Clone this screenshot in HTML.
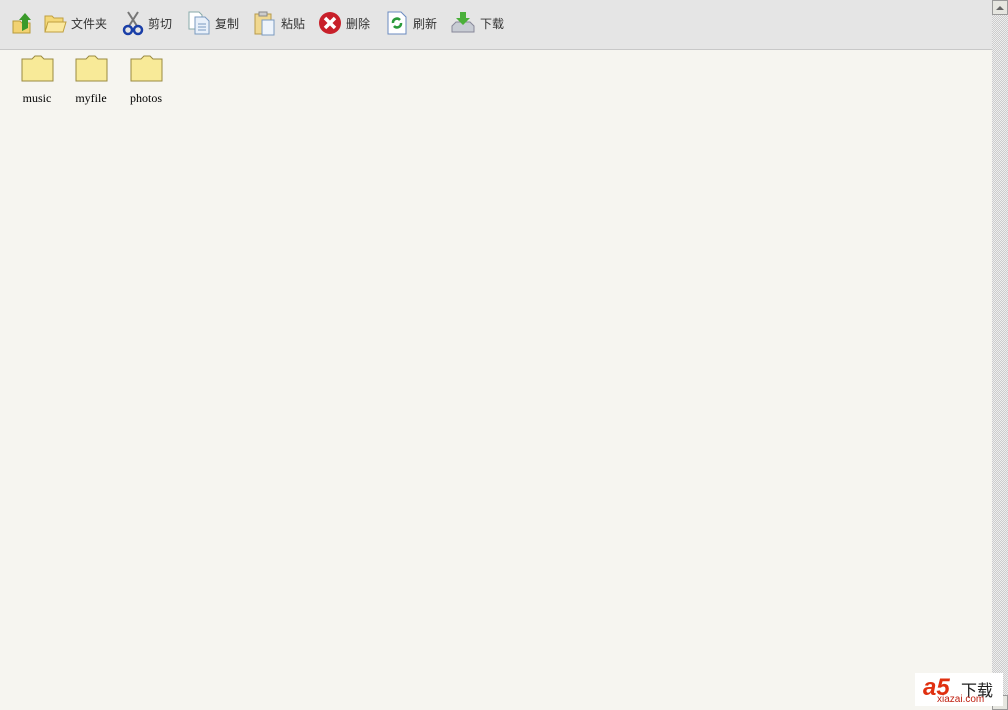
<!DOCTYPE html>
<html><head><meta charset="utf-8"><style>
*{margin:0;padding:0;box-sizing:border-box}
body{width:1008px;height:710px;background:#f6f5f0;position:relative;overflow:hidden;font-family:"Liberation Sans","Noto Sans CJK SC",sans-serif}
#tb{position:absolute;left:0;top:0;width:992px;height:50px;background:#e5e5e5;border-bottom:1px solid #c8c8c8}
.it{position:absolute;top:10px;height:26px;display:flex;align-items:center;font-size:12px;color:#333}
.it svg{margin-right:4px}
#sb{position:absolute;left:992px;top:0;width:16px;height:710px;background-color:#eee;background-image:linear-gradient(45deg,#ccc 25%,transparent 25%,transparent 75%,#ccc 75%),linear-gradient(45deg,#ccc 25%,transparent 25%,transparent 75%,#ccc 75%);background-size:2px 2px;background-position:0 0,1px 1px}
.btn{position:absolute;left:992px;width:16px;height:15px;background:#e6e6e0;border:1px solid #999}
.f{position:absolute;top:54px;width:50px;text-align:center;font-family:"Liberation Serif",serif;font-size:12px;color:#000}
.f svg{display:block;margin:0 auto 9px}
</style></head><body>
<div id="tb"></div>
<div class="it" style="left:10px"><svg width="24" height="24" viewBox="0 0 24 24"><path d="M3 10h7l2 2h8v10H3z" fill="#f2d272" stroke="#b89a3a"/><path d="M12 20V9H9l6-7 6 7h-3v8z" fill="#3a9a2a"/></svg></div>
<div class="it" style="left:43px"><svg width="24" height="22" viewBox="0 0 24 22"><path d="M2 4h7l2 2h9v14H2z" fill="#f4d878" stroke="#c0a040"/><path d="M5 10h18l-3 10H2z" fill="#fbe9a0" stroke="#c0a040"/></svg>文件夹</div>
<div class="it" style="left:122px"><svg width="22" height="26" viewBox="0 0 22 26"><path d="M6 2l9 14M16 2L7 16" stroke="#777" stroke-width="2"/><circle cx="6" cy="20" r="4" fill="none" stroke="#1a3fa8" stroke-width="2.5"/><circle cx="16" cy="20" r="4" fill="none" stroke="#1a3fa8" stroke-width="2.5"/></svg>剪切</div>
<div class="it" style="left:187px"><svg width="24" height="26" viewBox="0 0 24 26"><path d="M2 2h10l3 3v14H2z" fill="#fff" stroke="#8aa"/><path d="M8 7h10l4 4v13H8z" fill="#e8f0fa" stroke="#7a9ac0"/><path d="M11 14h8M11 17h8M11 20h8" stroke="#7a9ac0"/></svg>复制</div>
<div class="it" style="left:253px"><svg width="24" height="26" viewBox="0 0 24 26"><rect x="2" y="4" width="16" height="20" fill="#f0d890" stroke="#b89a4a"/><rect x="6" y="2" width="8" height="4" fill="#ccc" stroke="#888"/><path d="M9 10h12v15H9z" fill="#eef4fb" stroke="#7a9ac0"/></svg>粘贴</div>
<div class="it" style="left:318px"><svg width="24" height="24" viewBox="0 0 24 24"><circle cx="12" cy="12" r="11" fill="#c8202a"/><path d="M7 7l10 10M17 7L7 17" stroke="#fff" stroke-width="3.5"/></svg>删除</div>
<div class="it" style="left:385px"><svg width="24" height="26" viewBox="0 0 24 26"><path d="M3 2h13l5 5v17H3z" fill="#fff" stroke="#6a8ac0"/><path d="M8 13a4 4 0 0 1 7-3M16 13a4 4 0 0 1-7 3" stroke="#2a9a3a" stroke-width="2.5" fill="none"/></svg>刷新</div>
<div class="it" style="left:450px"><svg width="26" height="26" viewBox="0 0 26 26"><path d="M2 16l4-4h14l4 4v6H2z" fill="#c8ccd4" stroke="#889"/><path d="M10 2h6v6h4l-7 7-7-7h4z" fill="#4ab03a"/></svg>下载</div>
<div class="f" style="left:12px"><svg width="33" height="28" viewBox="0 0 33 28"><path d="M1 5h10l3-3h6l3 3h9v22H1z" fill="#f8ea98" stroke="#9a8a40"/></svg>music</div>
<div class="f" style="left:66px"><svg width="33" height="28" viewBox="0 0 33 28"><path d="M1 5h10l3-3h6l3 3h9v22H1z" fill="#f8ea98" stroke="#9a8a40"/></svg>myfile</div>
<div class="f" style="left:121px"><svg width="33" height="28" viewBox="0 0 33 28"><path d="M1 5h10l3-3h6l3 3h9v22H1z" fill="#f8ea98" stroke="#9a8a40"/></svg>photos</div>
<div id="sb"></div>
<div class="btn" style="top:0"><svg width="14" height="13"><path d="M3 9h8L7 5z" fill="#666"/></svg></div>
<div class="btn" style="top:695px"></div>
<div style="position:absolute;left:915px;top:673px;width:88px;height:33px;background:#fff"><span style="position:absolute;left:8px;top:1px;color:#e03010;font:bold 24px 'Liberation Sans';font-style:italic">a5</span><span style="position:absolute;left:46px;top:4px;font-size:16px;color:#222">下载</span><span style="position:absolute;left:22px;top:21px;font-size:10px;color:#c02010">xiazai.com</span></div>
</body></html>
